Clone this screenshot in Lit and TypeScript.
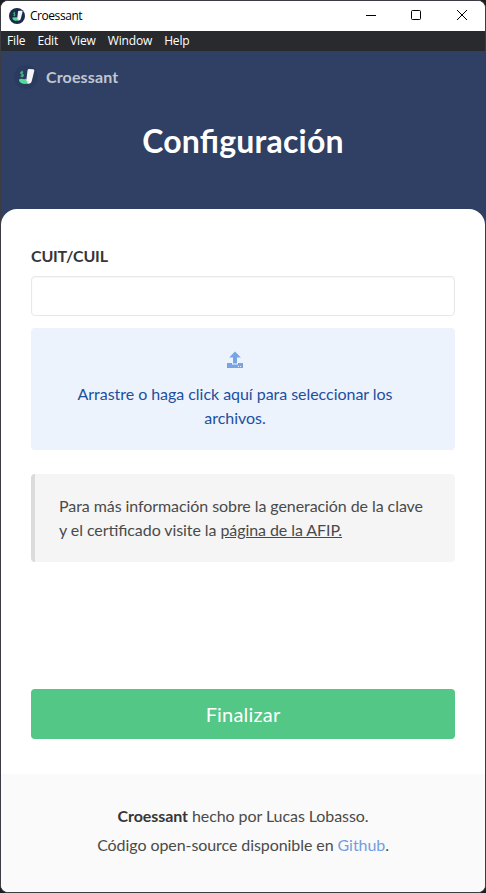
import { LitElement, html, css, svg } from "lit";
import { customElement } from "lit/decorators.js";

const mark = svg`
  <path d="M13.6 5q.4-1 1.500-1l4 .2q1.500.2 1.200 1.600L17.900 15.500q-.7 3.300-3.400 3.300-2.500-.2-3.300-2.300 1-1 1.300-2.800z" fill="#f4f6f6"/>
  <path d="M11.500 13.500q.8 2.500 3 2.800l-.5 2.500q-2.500-.3-3.300-2.300z" fill="#d3d8da"/>
  <path d="M4.800 14.800q2-1.600 4.200-.8l2.700.3q.5 2 2 4.200-3 .9-5.700.1-2.700-.6-3.200-3.800z" fill="#4fdb98"/>
  <path d="M9.300 7.300q-2.600-.7-2.600.8 0 .9 1.400 1.200 1.500.4 1.200 1.500-.5 1.100-2.800.3M8.100 5.800v6.500" fill="none" stroke="#43bd84" stroke-width="1.100"/>`;

@customElement("app-root")
class AppRoot extends LitElement {
  static styles = css`
    :host { display: block; background: #1d1e22; }
    * { box-sizing: border-box; }
    .window {
      width: 486px; height: 893px; display: flex; flex-direction: column;
      font: 16px/24px Lato, sans-serif; color: #4a4a4a; background: #fff;
      font-feature-settings: "liga" 1;
      border: 1px solid #3c3d42; border-radius: 8px; overflow: hidden;
    }
    .titlebar { height: 30px; flex: none; display: flex; align-items: center; padding-left: 8px; font-family: "Open Sans", sans-serif; font-size: 12px; line-height: 16px; letter-spacing: -0.45px; color: #000; background: #fff; }
    .titlebar .name { margin-left: 5px; flex: 1; }
    .controls { display: flex; }
    .controls svg { width: 46px; height: 30px; display: block; }
    .menubar { height: 20px; flex: none; display: flex; gap: 12px; align-items: center; padding: 0 0 1px 6px; background: #292a2d; color: #fff; font-family: "Open Sans", sans-serif; font-size: 12px; line-height: 17px; letter-spacing: -0.15px; }
    .hero { flex: none; height: 176px; background: #2f4064; margin-bottom: -18px; }
    .brand { display: flex; align-items: center; height: 52px; padding-left: 13px; gap: 8px; font-weight: 700; color: #c1c6d1; letter-spacing: 0.13px; }
    h1 { margin: 13px 0 0; text-align: center; color: #fff; font-size: 32px; line-height: 50px; font-weight: 700; letter-spacing: 0.2px; }
    .card { flex: none; height: 565px; background: #fff; border-radius: 16px 16px 0 0; padding: 35px 30px 0; display: flex; flex-direction: column; position: relative; }
    .label { font-weight: 700; color: #363636; letter-spacing: -0.2px; }
    .input { height: 40px; margin-top: 8px; border: 1px solid #e8e8e8; border-radius: 4px; box-shadow: inset 0 1px 2px rgba(10, 10, 10, 0.04); }
    .drop { height: 122px; margin-top: 12px; padding: 20px 40px 0 24px; background: #ecf3fc; color: #1d4f9f; border-radius: 4px; text-align: center; letter-spacing: -0.04px; }
    .drop svg { display: block; margin: 0 auto 10px; }
    .note { height: 88px; margin-top: 24px; padding: 20px 0 0 24px; background: #f5f5f5; border-left: 4px solid #dbdbdb; border-radius: 4px; letter-spacing: -0.075px; white-space: nowrap; }
    .row { display: flex; gap: 4px; }
    .row .page { text-decoration: underline; }
    .button { height: 50px; margin-top: 127px; background: #53c786; color: #fff; border-radius: 4px; font-size: 20px; line-height: 51px; text-align: center; letter-spacing: 0.2px; }
    .footer { flex: 1; background: #fafafa; text-align: center; padding-top: 27px; line-height: 29px; letter-spacing: -0.075px; }
    .footer b { color: #363636; }
    .footer .link { color: #739ddf; }
  `;

  render() {
    return html`<div class="window">
      <div class="titlebar"><svg width="16" height="16" viewBox="0 0 24 24"><circle cx="12" cy="12" r="12" fill="#1d2b4b"/>${mark}</svg><span class="name">Croessant</span>
        <div class="controls">
          <svg viewBox="0 0 46 30" stroke="#000" fill="none"><path d="M19 14.500h10"/></svg>
          <svg viewBox="0 0 46 30" stroke="#000" fill="none"><rect x="18.500" y="9.500" width="9" height="9" rx="1"/></svg>
          <svg viewBox="0 0 46 30" stroke="#000" fill="none"><path d="M18 9l10 10M28 9L18 19"/></svg>
        </div>
      </div>
      <div class="menubar"><span>File</span><span>Edit</span><span>View</span><span>Window</span><span>Help</span></div>
      <div class="hero"><div class="brand"><svg width="24" height="24" viewBox="0 0 24 24"><circle cx="12" cy="12" r="12" fill="#2b3b60"/>${mark}</svg><span>Croessant</span></div><h1>Configuración</h1></div>
      <div class="card">
        <div class="label">CUIT/CUIL</div>
        <div class="input"></div>
        <div class="drop"><svg width="16" height="24" viewBox="0 0 16 24" fill="#77a4e5"><path d="M8 3.500l5.800 6H10v6H6v-6H2.200z"/><path d="M0 15h5v1.500h6V15h5v5H0z"/><path d="M11 18h1v1h-1zM13 18h1v1h-1z" fill="#ecf3fc"/></svg><div>Arrastre o haga click aquí para seleccionar los archivos.</div></div>
        <div class="note"><div>Para más información sobre la generación de la clave</div><div class="row"><span>y el certificado visite la</span><span class="page">página de la AFIP.</span></div></div>
        <div class="button">Finalizar</div>
      </div>
      <div class="footer"><b>Croessant</b> hecho por Lucas Lobasso.<br>Código open-source disponible en <span class="link">Github</span>.</div>
    </div>`;
  }
}
